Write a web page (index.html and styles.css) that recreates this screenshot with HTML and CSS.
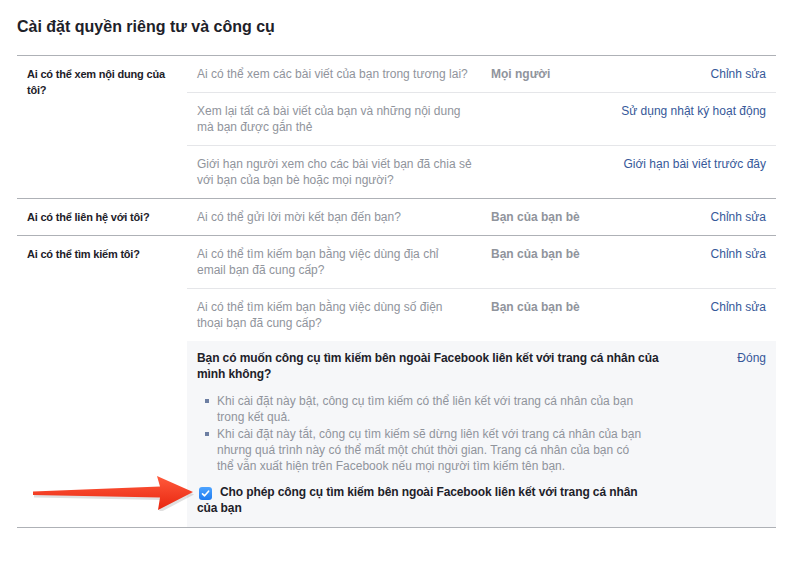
FILE: index.html
```html
<!DOCTYPE html>
<html lang="vi">
<head>
    <meta charset="UTF-8">
    <title>Cài đặt quyền riêng tư và công cụ</title>
    <link rel="stylesheet" href="styles.css">
</head>
<body>

<div class="page">
    <h2 class="title">Cài đặt quyền riêng tư và công cụ</h2>

    <div class="settings">
        <div class="section">
            <div class="section-label">Ai có thể xem nội dung của<br>tôi?</div>
            <div class="items">
                <div class="item">
                    <div class="question">Ai có thể xem các bài viết của bạn trong tương lai?</div>
                    <div class="value">Mọi người</div>
                    <a class="action" href="#">Chỉnh sửa</a>
                </div>
                <div class="item">
                    <div class="question">Xem lại tất cả bài viết của bạn và những nội dung<br>mà bạn được gắn thẻ</div>
                    <div class="value"></div>
                    <a class="action" href="#">Sử dụng nhật ký hoạt động</a>
                </div>
                <div class="item">
                    <div class="question">Giới hạn người xem cho các bài viết bạn đã chia sẻ<br>với bạn của bạn bè hoặc mọi người?</div>
                    <div class="value"></div>
                    <a class="action" href="#">Giới hạn bài viết trước đây</a>
                </div>
            </div>
        </div>

        <div class="section">
            <div class="section-label">Ai có thể liên hệ với tôi?</div>
            <div class="items">
                <div class="item">
                    <div class="question">Ai có thể gửi lời mời kết bạn đến bạn?</div>
                    <div class="value">Bạn của bạn bè</div>
                    <a class="action" href="#">Chỉnh sửa</a>
                </div>
            </div>
        </div>

        <div class="section">
            <div class="section-label">Ai có thể tìm kiếm tôi?</div>
            <div class="items">
                <div class="item">
                    <div class="question">Ai có thể tìm kiếm bạn bằng việc dùng địa chỉ<br>email bạn đã cung cấp?</div>
                    <div class="value">Bạn của bạn bè</div>
                    <a class="action" href="#">Chỉnh sửa</a>
                </div>
                <div class="item">
                    <div class="question">Ai có thể tìm kiếm bạn bằng việc dùng số điện<br>thoại bạn đã cung cấp?</div>
                    <div class="value">Bạn của bạn bè</div>
                    <a class="action" href="#">Chỉnh sửa</a>
                </div>
                <div class="expanded">
                    <div class="expanded-head">
                        <div class="expanded-title">Bạn có muốn công cụ tìm kiếm bên ngoài Facebook liên kết với trang cá nhân của<br>mình không?</div>
                        <a class="action" href="#">Đóng</a>
                    </div>
                    <ul class="notes">
                        <li>Khi cài đặt này bật, công cụ tìm kiếm có thể liên kết với trang cá nhân của bạn<br>trong kết quả.</li>
                        <li>Khi cài đặt này tắt, công cụ tìm kiếm sẽ dừng liên kết với trang cá nhân của bạn<br>nhưng quá trình này có thể mất một chút thời gian. Trang cá nhân của bạn có<br>thể vẫn xuất hiện trên Facebook nếu mọi người tìm kiếm tên bạn.</li>
                    </ul>
                    <label class="allow">
                        <span class="checkbox">
                            <svg width="9" height="9" viewBox="0 0 9 9"><path d="M1.5 4.8 L3.6 6.8 L7.6 2.2" fill="none" stroke="#fff" stroke-width="1.6" stroke-linecap="round" stroke-linejoin="round"/></svg>
                        </span>Cho phép công cụ tìm kiếm bên ngoài Facebook liên kết với trang cá nhân<br>của bạn
                    </label>
                </div>
            </div>
        </div>
    </div>

    <!-- mũi tên chú thích -->
    <svg class="arrow" width="200" height="50" viewBox="0 0 200 50">
        <defs>
            <linearGradient id="arrowFill" x1="0" y1="0" x2="0" y2="1">
                <stop offset="0" stop-color="#ff5a3c"/>
                <stop offset="1" stop-color="#e8260f"/>
            </linearGradient>
        </defs>
        <path d="M33 31 L160 26 L157 15 L193 31.5 L158 50 L160 37 L33 34.5 Z" fill="#000" opacity="0.12" transform="translate(1 2)"/>
        <path d="M33 30.5 L160 25.5 L157 15 L193 31 L158 49 L160 36.5 L33 34 Z" fill="url(#arrowFill)"/>
    </svg>
</div>

</body>
</html>
```

FILE: styles.css
```css
body {
    margin: 0;
    background-color: #fff;
    font-family: "Liberation Sans", Arial, sans-serif;
    font-size: 12px;
    line-height: 16px;
    color: #1d2129;
}
.page {
    position: relative;
    width: 759px;
    padding: 17px 0 0 17px;
}
.title {
    margin: 0 0 18px;
    font-size: 16px;
    line-height: 20px;
    font-weight: bold;
    color: #1d2129;
}
.settings {
    border-top: 1px solid #aeb1b6;
}
.section {
    display: flex;
    border-bottom: 1px solid #aeb1b6;
}
.section-label {
    width: 150px;
    padding: 10px;
    font-size: 11px;
    font-weight: bold;
    letter-spacing: -0.2px;
    white-space: nowrap;
    flex-shrink: 0;
}
.items {
    flex: 1;
}
.item {
    display: flex;
    padding: 10px;
    border-top: 1px solid #e5e6e9;
}
.item:first-child {
    border-top: none;
}
.question {
    width: 294px;
    color: #90949c;
    flex-shrink: 0;
}
.value {
    flex: 1;
    color: #90949c;
    font-weight: bold;
}
.action {
    color: #365899;
    text-decoration: none;
    text-align: right;
}
.expanded {
    background-color: #f6f7f9;
    padding: 9px 10px 11px;
}
.expanded-head {
    display: flex;
    justify-content: space-between;
}
.expanded-title {
    font-weight: bold;
    letter-spacing: -0.1px;
}
.notes {
    list-style: none;
    margin: 11px 0 10px;
    padding: 0 0 0 20px;
    color: #90949c;
}
.notes li {
    position: relative;
    margin-bottom: 1px;
}
.notes li::before {
    content: "";
    position: absolute;
    left: -12px;
    top: 6px;
    width: 4px;
    height: 4px;
    background-color: #6d7fa3;
}
.allow {
    display: block;
    font-weight: bold;
    letter-spacing: -0.1px;
}
.checkbox {
    display: inline-flex;
    align-items: center;
    justify-content: center;
    width: 13px;
    height: 13px;
    margin: 0 8px 0 2px;
    border-radius: 3px;
    background: linear-gradient(#4da3ff, #1f7cf0);
    vertical-align: -2px;
}
.arrow {
    position: absolute;
    left: 0;
    top: 461px;
}
```
